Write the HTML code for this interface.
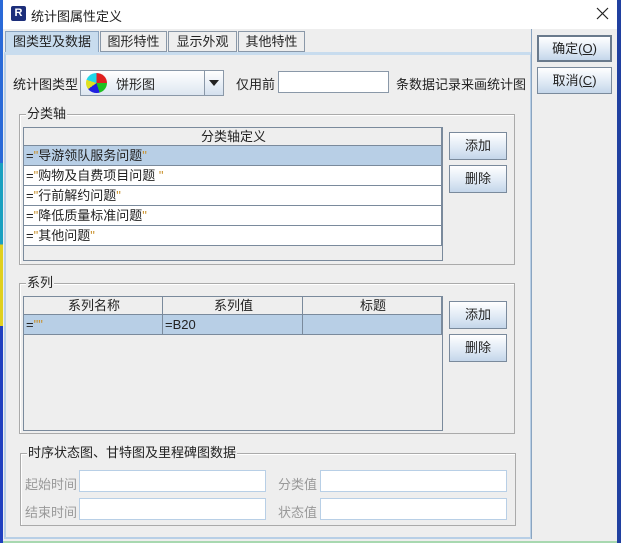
<!DOCTYPE html>
<html><head><meta charset="utf-8"><style>
*{box-sizing:border-box;margin:0;padding:0}
body{width:621px;height:543px;overflow:hidden;background:#a8d8b0;font:12px "Liberation Sans","Noto Sans CJK SC",sans-serif;color:#222;position:relative}
.a{position:absolute}
.btn{position:absolute;border:1px solid #7a8a9c;background:linear-gradient(#fff,#dde8f4 60%,#c4d6ea);text-align:center;font-size:13px;line-height:25px}
.cell{position:absolute;border-right:1px solid #7a8a9c;border-bottom:1px solid #7a8a9c;white-space:nowrap;padding-left:2px;line-height:19px;font-size:13px}
.grp{position:absolute;border:1px solid #aaa;box-shadow:1px 1px 0 #fff inset}
.gt{position:absolute;top:-9px;left:6px;background:#eeeeee;padding:0 1px;line-height:16px;font-size:13px}
.q{color:#c8902a}
.inp{position:absolute;background:#fff;border:1px solid #b8cfe6}
.l{position:absolute;font-size:13px}
</style></head><body>
<div class="a" style="left:0;top:0;width:3px;height:543px;background:linear-gradient(#2a6ad8 0 30%,#1aa0c0 30% 45%,#e0d020 45% 60%,#2040c0 60%)"></div>
<div class="a" style="left:617px;top:0;width:4px;height:543px;background:#2040a0"></div>
<div class="a" style="left:3px;top:0;width:614px;height:541px;background:#eeeeee"></div>
<div class="a" style="left:3px;top:0;width:614px;height:29px;background:#fff"></div>
<div class="a" style="left:11px;top:6px;width:15px;height:15px;background:#1c2e7a;border-radius:2px;color:#fff;font:bold 11px 'Liberation Sans';text-align:center;line-height:15px">R</div>
<div class="a" style="left:31px;top:6px;font-size:13px">统计图属性定义</div>
<svg class="a" style="left:596px;top:7px" width="13" height="13"><path d="M1 1L12 12M12 1L1 12" stroke="#222" stroke-width="1.2"/></svg>
<div class="a" style="left:5px;top:31px;width:94px;height:22px;background:#c8dcee;border:1px solid #8aa4c0;border-bottom:none;text-align:center;line-height:20px;font-size:13px">图类型及数据</div>
<div class="a" style="left:100px;top:31px;width:67px;height:21px;background:#eee;border:1px solid #8a98a8;text-align:center;line-height:19px;font-size:13px">图形特性</div>
<div class="a" style="left:168px;top:31px;width:69px;height:21px;background:#eee;border:1px solid #8a98a8;text-align:center;line-height:19px;font-size:13px">显示外观</div>
<div class="a" style="left:238px;top:31px;width:67px;height:21px;background:#eee;border:1px solid #8a98a8;text-align:center;line-height:19px;font-size:13px">其他特性</div>
<div class="a" style="left:4px;top:52px;width:528px;height:487px;border:2px solid #b8cfe6;border-top:3px solid #c8dcee"></div>
<div class="a" style="left:531px;top:29px;width:1px;height:510px;background:#8aa4c0"></div>
<div class="btn" style="left:537px;top:35px;width:75px;height:27px;border:2px solid #6a7a8c;line-height:23px">确定(<u>O</u>)</div>
<div class="btn" style="left:537px;top:67px;width:75px;height:27px">取消(<u>C</u>)</div>
<div class="l" style="left:13px;top:74px">统计图类型</div>
<div class="a" style="left:80px;top:70px;width:144px;height:26px;border:1px solid #8a98a8;background:linear-gradient(#fff,#dde6f0)"></div>
<div class="a" style="left:204px;top:70px;width:20px;height:26px;border:1px solid #8a98a8;background:linear-gradient(#fff,#d4e0ee)"></div>
<div class="a" style="left:209px;top:80px;border:5px solid transparent;border-top:6px solid #222"></div>
<div class="a" style="left:86px;top:73px;width:21px;height:20px;border-radius:50%;background:conic-gradient(#e02020 0 25%,#20c020 25% 45%,#2020e0 45% 65%,#e0e020 65% 80%,#20d8e8 80%)"></div>
<div class="l" style="left:116px;top:74px">饼形图</div>
<div class="l" style="left:236px;top:74px">仅用前</div>
<div class="inp" style="left:278px;top:71px;width:111px;height:22px;border-color:#8a98a8"></div>
<div class="l" style="left:396px;top:74px">条数据记录来画统计图</div>
<div class="grp" style="left:19px;top:114px;width:496px;height:151px"><div class="gt">分类轴</div></div>
<div class="a" style="left:23px;top:127px;width:420px;height:134px;border:1px solid #7a8a9c;background:#eee"></div>
<div class="cell" style="left:24px;top:128px;width:418px;height:18px;text-align:center;line-height:17px">分类轴定义</div>
<div class="cell" style="left:24px;top:146px;width:418px;height:20px;background:#b8cfe6">=<span class="q">"</span>导游领队服务问题<span class="q">"</span></div>
<div class="cell" style="left:24px;top:166px;width:418px;height:20px;background:#fff">=<span class="q">"</span>购物及自费项目问题 <span class="q">"</span></div>
<div class="cell" style="left:24px;top:186px;width:418px;height:20px;background:#fff">=<span class="q">"</span>行前解约问题<span class="q">"</span></div>
<div class="cell" style="left:24px;top:206px;width:418px;height:20px;background:#fff">=<span class="q">"</span>降低质量标准问题<span class="q">"</span></div>
<div class="cell" style="left:24px;top:226px;width:418px;height:20px;background:#fff">=<span class="q">"</span>其他问题<span class="q">"</span></div>
<div class="btn" style="left:449px;top:132px;width:58px;height:28px">添加</div>
<div class="btn" style="left:449px;top:165px;width:58px;height:28px">删除</div>
<div class="grp" style="left:19px;top:283px;width:496px;height:151px"><div class="gt">系列</div></div>
<div class="a" style="left:23px;top:296px;width:420px;height:135px;border:1px solid #7a8a9c;background:#eee"></div>
<div class="cell" style="left:24px;top:297px;width:139px;height:18px;text-align:center;line-height:17px">系列名称</div>
<div class="cell" style="left:163px;top:297px;width:140px;height:18px;text-align:center;line-height:17px">系列值</div>
<div class="cell" style="left:303px;top:297px;width:139px;height:18px;text-align:center;line-height:17px">标题</div>
<div class="cell" style="left:24px;top:315px;width:139px;height:20px;background:#b8cfe6">=<span class="q">""</span></div>
<div class="cell" style="left:163px;top:315px;width:140px;height:20px;background:#b8cfe6">=B20</div>
<div class="cell" style="left:303px;top:315px;width:139px;height:20px;background:#b8cfe6"></div>
<div class="btn" style="left:449px;top:301px;width:58px;height:28px">添加</div>
<div class="btn" style="left:449px;top:334px;width:58px;height:28px">删除</div>
<div class="grp" style="left:20px;top:453px;width:496px;height:73px"><div class="gt">时序状态图、甘特图及里程碑图数据</div></div>
<div class="l" style="left:25px;top:474px;color:#999">起始时间</div>
<div class="inp" style="left:79px;top:470px;width:187px;height:22px"></div>
<div class="l" style="left:25px;top:502px;color:#999">结束时间</div>
<div class="inp" style="left:79px;top:498px;width:187px;height:22px"></div>
<div class="l" style="left:278px;top:474px;color:#999">分类值</div>
<div class="inp" style="left:320px;top:470px;width:187px;height:22px"></div>
<div class="l" style="left:278px;top:502px;color:#999">状态值</div>
<div class="inp" style="left:320px;top:498px;width:187px;height:22px"></div>
</body></html>
